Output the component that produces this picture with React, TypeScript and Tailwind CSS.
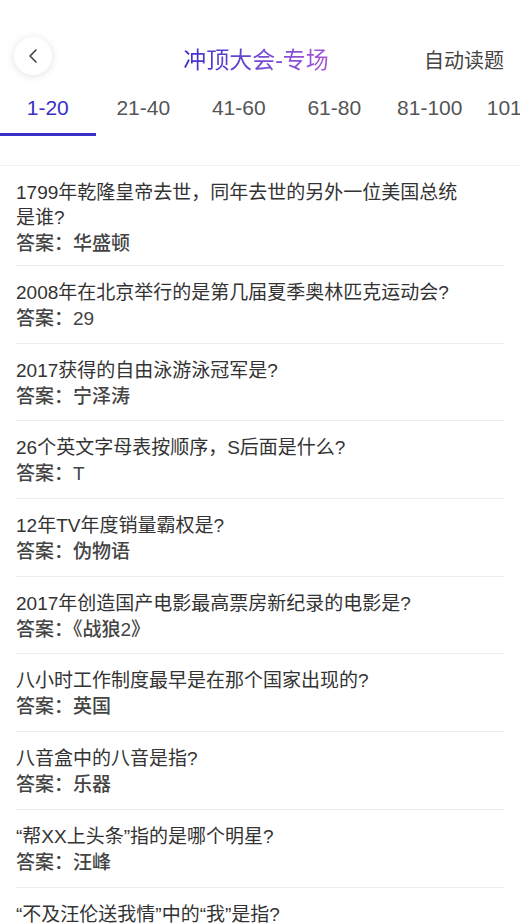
import { ChevronLeft } from "lucide-react";

const tabs = ["1-20", "21-40", "41-60", "61-80", "81-100", "101-120"];

const questions = [
  { q: "1799年乾隆皇帝去世，同年去世的另外一位美国总统是谁?", a: "华盛顿" },
  { q: "2008年在北京举行的是第几届夏季奥林匹克运动会?", a: "29" },
  { q: "2017获得的自由泳游泳冠军是?", a: "宁泽涛" },
  { q: "26个英文字母表按顺序，S后面是什么?", a: "T" },
  { q: "12年TV年度销量霸权是?", a: "伪物语" },
  { q: "2017年创造国产电影最高票房新纪录的电影是?", a: "《战狼2》" },
  { q: "八小时工作制度最早是在那个国家出现的?", a: "英国" },
  { q: "八音盒中的八音是指?", a: "乐器" },
  { q: "“帮XX上头条”指的是哪个明星?", a: "汪峰" },
  { q: "“不及汪伦送我情”中的“我”是指?", a: "李白" },
];

export default function App() {
  return (
    <div className="w-[520px] h-[924px] overflow-hidden bg-white font-['Liberation_Sans','Noto_Sans_CJK_SC',sans-serif] text-[#333]">
      {/* Header */}
      <div className="flex items-center justify-between pt-[38px] pl-[14px] pr-4 h-[79px]">
        <button className="-mt-[6px] w-[38px] h-[38px] rounded-full bg-white shadow-[0_1px_8px_rgba(0,0,0,0.12)] flex items-center justify-center text-[#444]">
          <ChevronLeft size={24} strokeWidth={1.6} />
        </button>
        <h1 className="ml-[36px] mt-[4px] text-[23px] bg-gradient-to-r from-[#3b2fcc] to-[#a455d8] bg-clip-text text-transparent">
          冲顶大会-专场
        </h1>
        <span className="mt-[4px] text-[20px] text-[#444]">自动读题</span>
      </div>

      {/* Tabs */}
      <div className="flex mt-[13px] whitespace-nowrap">
        {tabs.map((t, i) => (
          <div
            key={t}
            className={`shrink-0 w-[95.5px] h-[44px] flex flex-col items-center justify-between ${
              i === 0 ? "text-[#3a2fc8]" : "text-[#555]"
            }`}
          >
            <span className="text-[21px] leading-[30px] pt-[1px]">{t}</span>
            {i === 0 && <div className="w-full h-[3px] bg-[#3a2fc8]" />}
          </div>
        ))}
      </div>

      <div className="mt-[29px] h-px bg-[#f0f0f0]" />

      {/* Question list */}
      <div className="px-4">
        {questions.map((item, i) => (
          <div
            key={i}
            className={`pt-[14px] border-b border-[#ededed] ${i === 0 ? "pb-[7px]" : "pb-[9.7px]"}`}
          >
            <p className="text-[19px] leading-[25px] pr-[30px]">{item.q}</p>
            <p className="text-[19px] leading-[28px] font-medium text-[#444]">
              答案：{item.a}
            </p>
          </div>
        ))}
      </div>
    </div>
  );
}
